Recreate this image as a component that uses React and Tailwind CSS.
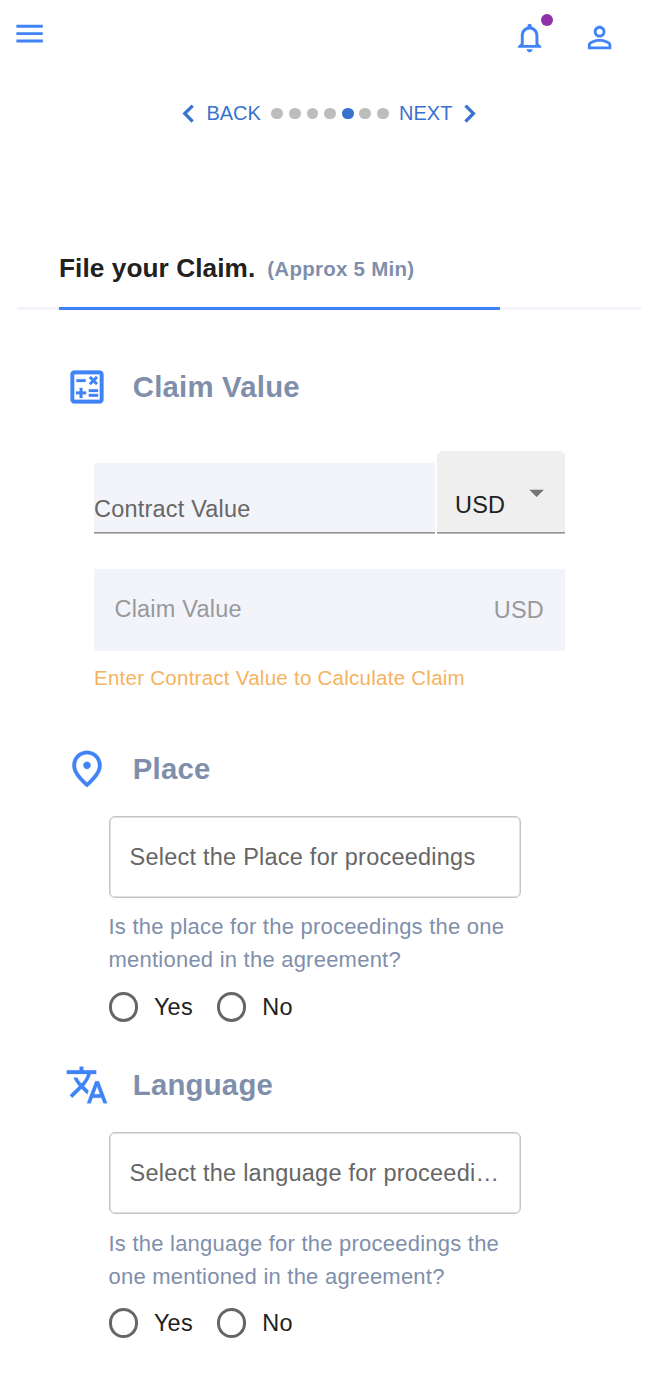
import React from "react";

const ICONS = {
  menu: "M3 18h18v-2H3v2zm0-5h18v-2H3v2zm0-7v2h18V6H3z",
  bell: "M12 22c1.1 0 2-.9 2-2h-4c0 1.1.9 2 2 2zm6-6v-5c0-3.07-1.63-5.64-4.5-6.32V4c0-.83-.67-1.5-1.5-1.5s-1.5.67-1.5 1.5v.68C7.64 5.36 6 7.92 6 11v5l-2 2v1h16v-1l-2-2zm-2 1H8v-6c0-2.48 1.51-4.5 4-4.5s4 2.02 4 4.5v6z",
  person:
    "M12 5.9c1.16 0 2.1.94 2.1 2.1s-.94 2.1-2.1 2.1S9.9 9.16 9.9 8s.94-2.1 2.1-2.1m0 9c2.97 0 6.1 1.46 6.1 2.1v1.1H5.9V17c0-.64 3.13-2.1 6.1-2.1M12 4C9.79 4 8 5.79 8 8s1.79 4 4 4 4-1.79 4-4-1.79-4-4-4zm0 9c-2.67 0-8 1.34-8 4v3h16v-3c0-2.66-5.33-4-8-4z",
  left: "M15.41 16.59 10.83 12l4.58-4.59L14 6l-6 6 6 6 1.41-1.41z",
  right: "M8.59 16.59 13.17 12 8.59 7.41 10 6l6 6-6 6-1.41-1.41z",
  calculate:
    "M19 3H5c-1.1 0-2 .9-2 2v14c0 1.1.9 2 2 2h14c1.1 0 2-.9 2-2V5c0-1.1-.9-2-2-2zm0 16H5V5h14v14zM6.25 7.72h5v1.5h-5zM13 15.75h5v1.5h-5zM13 13.25h5v1.5h-5zM8 18h1.5v-2h2v-1.5h-2v-2H8v2H6V16h2zM14.09 10.95l1.41-1.41 1.41 1.41 1.06-1.06-1.41-1.42 1.41-1.41L16.91 6 15.5 7.41 14.09 6l-1.06 1.06 1.41 1.41-1.41 1.42z",
  place:
    "M12 2C7.8 2 4 5.22 4 10.2c0 3.32 2.67 7.25 8 11.8 5.33-4.55 8-8.48 8-11.8C20 5.22 16.2 2 12 2zm0 17.33c-4.05-3.7-6-6.79-6-9.14C6 6.57 8.65 4 12 4s6 2.57 6 6.2c0 2.34-1.95 5.44-6 9.13zM12 8c-1.1 0-2 .9-2 2s.9 2 2 2 2-.9 2-2-.9-2-2-2z",
  translate:
    "m12.87 15.07-2.54-2.51.03-.03c1.74-1.94 2.98-4.17 3.71-6.53H17V4h-7V2H8v2H1v1.99h11.17C11.5 7.92 10.44 9.75 9 11.35 8.07 10.32 7.3 9.19 6.69 8h-2c.73 1.63 1.73 3.17 2.98 4.56l-5.09 5.02L4 19l5-5 3.11 3.11.76-2.04zM18.5 10h-2L12 22h2l1.12-3h4.75L21 22h2l-4.5-12zm-2.62 7 1.62-4.33L19.12 17h-3.24z",
  drop: "M7 10l5 5 5-5z",
};

function Icon({ name, className }) {
  return (
    <svg viewBox="0 0 24 24" fill="currentColor" className={"shrink-0 " + className}>
      <path d={ICONS[name]} />
    </svg>
  );
}

function SectionTitle({ icon, children }) {
  return (
    <div className="flex h-11 items-center pl-[64.6px]">
      <Icon name={icon} className="size-11 stroke-[#4083f7] stroke-[0.15] text-[#4083f7]" />
      <h2 className="ml-[24.2px] text-[29.33px] leading-11 font-bold tracking-[0.22px] text-[#7f8fab]">{children}</h2>
    </div>
  );
}

function Radio({ label }) {
  return (
    <label className="flex items-center">
      <span className="size-[29.4px] rounded-full border-3 border-[#666]" />
      <span className="ml-4 text-[23.47px] leading-9 tracking-[0.22px] text-[#212121]">{label}</span>
    </label>
  );
}

function Question({ placeholder, lines, textClass }) {
  return (
    <div className="ml-[108.5px] w-[412px]">
      <div className="flex h-[82px] items-center rounded-[6px] border border-[#c4c4c4] pl-5 shadow-[inset_0_0_0_0.5px_#c4c4c4]">
        <span className="text-[23.47px] leading-9 tracking-[0.25px] whitespace-nowrap text-[#666]">{placeholder}</span>
      </div>
      <p className={"text-[22px] leading-[33px] tracking-[0.23px] whitespace-nowrap text-[#7f8fab] " + textClass}>
        {lines[0]}
        <br />
        {lines[1]}
      </p>
      <div className="flex h-9 items-center gap-6">
        <Radio label="Yes" />
        <Radio label="No" />
      </div>
    </div>
  );
}

export default function App() {
  return (
    <main className="h-[1386px] w-[662px] overflow-hidden bg-white font-['Liberation_Sans',Arial,sans-serif]">
      <header className="flex h-[74px] items-start justify-between pr-[44.4px] pl-[11.6px] text-[#4083f7]">
        <Icon name="menu" className="mt-4 size-[35.2px]" />
        <div className="flex gap-[35.2px] pt-[19.6px]">
          <div className="relative size-[35.2px]">
            <Icon name="bell" className="size-[35.2px]" />
            <span className="absolute -top-[6px] right-[-6px] size-3 rounded-full bg-[#9031aa]" />
          </div>
          <Icon name="person" className="size-[35.2px]" />
        </div>
      </header>

      <nav className="mt-[21.6px] flex h-9 items-center pl-[171.2px] text-[20px] text-[#3871cf]">
        <Icon name="left" className="size-[35.2px] stroke-[#3871cf] stroke-[0.3]" />
        <span className="w-[65.1px] pb-[1.4px] tracking-[0.03px]">BACK</span>
        <div className="flex w-[127.5px] gap-[5.87px]">
          {[0, 1, 2, 3, 4, 5, 6].map((i) => (
            <span key={i} className={"size-[11.73px] rounded-full " + (i === 4 ? "bg-[#3871cf]" : "bg-[#bdbdbd]")} />
          ))}
        </div>
        <span className="w-[53.2px] pb-[1.4px] tracking-[0.03px]">NEXT</span>
        <Icon name="right" className="size-[35.2px] stroke-[#3871cf] stroke-[0.3]" />
      </nav>

      <div className="mt-[117.4px] flex h-[38px] items-start pl-[59px] font-bold">
        <h1 className="text-[26.2px] leading-[38px] tracking-[0.08px] text-[#212121]">File your Claim.</h1>
        <span className="ml-3 text-[20.5px] leading-10 tracking-[0.25px] text-[#7f8fab]">(Approx 5 Min)</span>
      </div>
      <div className="mt-5 ml-[17px] h-[3px] w-[624px] bg-[#f3f4fa] pl-[42px]">
        <div className="h-full w-[441px] bg-[#4083f7]" />
      </div>

      <section className="mt-[54.6px]">
        <SectionTitle icon="calculate">Claim Value</SectionTitle>
        <div className="mt-[42.4px] ml-[94px] flex w-[471px] items-end justify-between text-[23.47px] tracking-[0.22px]">
          <div className="h-[71px] w-[341px] border-b border-[#bbbbbe] bg-[#f3f4fa] pt-7 leading-9 text-[#666] shadow-[inset_0_-1px_0_#949499]">
            Contract Value
          </div>
          <div className="flex h-[83px] w-[128px] justify-between rounded-t-[6px] border-b border-[#b8b8b8] bg-[#efefef] pr-[11px] pl-[18px] text-[#212121] shadow-[inset_0_-1px_0_#949494]">
            <span className="pt-9 leading-9">USD</span>
            <Icon name="drop" className="mt-[24px] size-[35.2px] text-[#757575]" />
          </div>
        </div>
        <div className="mt-[35px] ml-[94px] flex h-[82px] w-[471px] items-center justify-between bg-[#f3f4fa] pr-[21px] pl-[20.5px] text-[23.47px] tracking-[0.22px] text-[#97999d]">
          <span>Claim Value</span>
          <span className="pt-[2px]">USD</span>
        </div>
        <p className="mt-3 ml-[94px] text-[20.5px] leading-[30px] tracking-[0.26px] text-[#f5b25f]">
          Enter Contract Value to Calculate Claim
        </p>
      </section>

      <section className="mt-[54px]">
        <SectionTitle icon="place">Place</SectionTitle>
        <div className="h-[25px]" />
        <Question
          placeholder="Select the Place for proceedings"
          lines={["Is the place for the proceedings the one", "mentioned in the agreement?"]}
          textClass="mt-3 mb-[13px]"
        />
      </section>

      <section className="mt-[38px]">
        <SectionTitle icon="translate">Language</SectionTitle>
        <div className="h-[25px]" />
        <Question
          placeholder="Select the language for proceedi…"
          lines={["Is the language for the proceedings the", "one mentioned in the agreement?"]}
          textClass="mt-[13px] mb-3"
        />
      </section>
    </main>
  );
}
